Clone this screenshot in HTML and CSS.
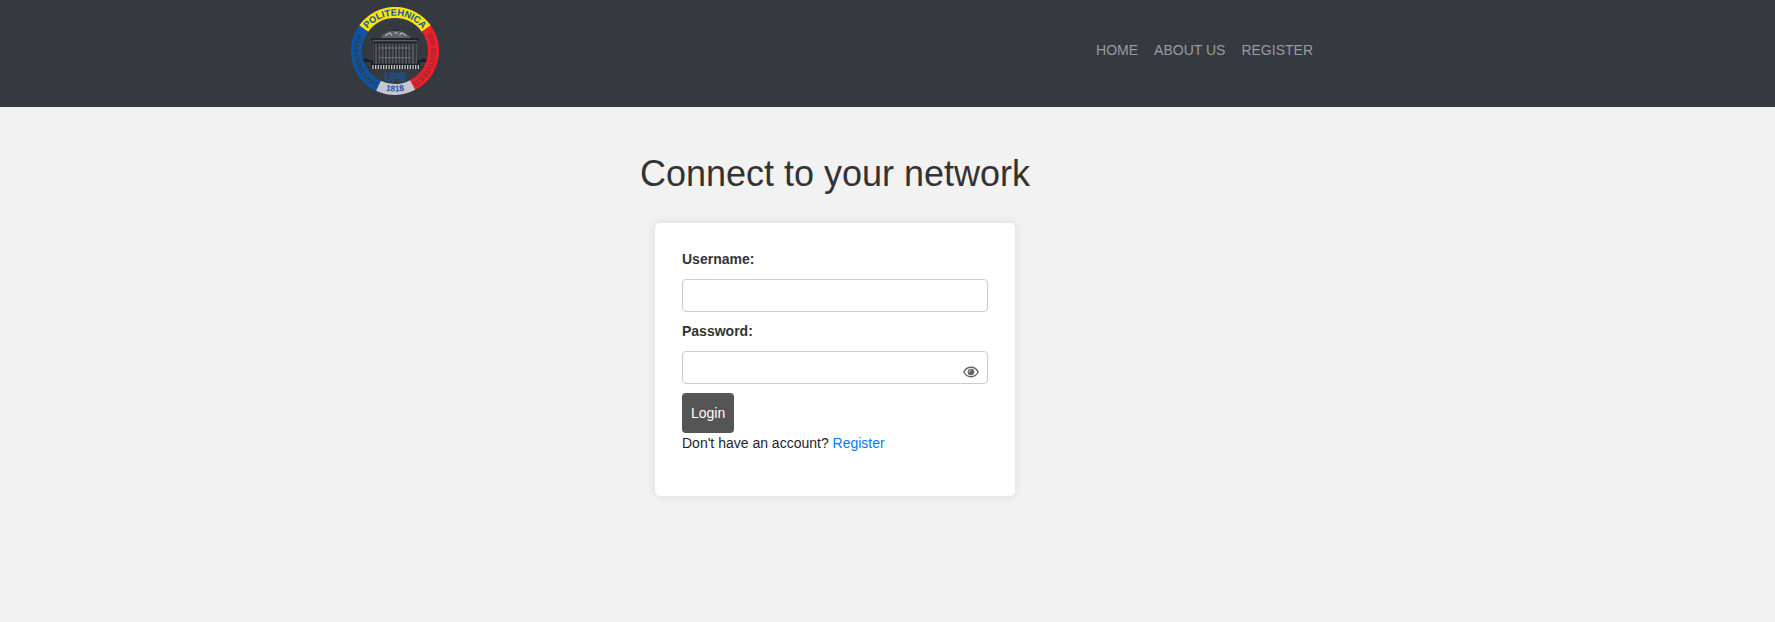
FILE: index.html
```html
<!DOCTYPE html>
<html lang="en">
<head>
<meta charset="utf-8">
<title>Connect to your network</title>
<link rel="stylesheet" href="styles.css">
</head>
<body>
<header class="site-header">
  <div class="header-inner">
    <a class="brand" href="#" aria-label="Politehnica home">
      <svg class="logo" viewBox="0 0 264 264">
        <defs>
          <path id="arc-top" d="M26 132A106 106 0 0 1 238 132"/>
          <path id="arc-left" d="M100 235A108 108 0 0 1 46 67"/>
          <path id="arc-right" d="M215 64A108 108 0 0 1 164 235"/>
          <path id="arc-bottom" d="M60 230A122 122 0 0 0 204 230"/>
        </defs>
        <g fill="none" stroke-width="33">
          <path stroke="#ffe20a" d="M38 65A115 115 0 0 1 226 65"/>
          <path stroke="#ed1f29" d="M226 65A115 115 0 0 1 185 234"/>
          <path stroke="#c5c6d0" d="M185 234A115 115 0 0 1 82 236"/>
          <path stroke="#0c54a4" d="M82 236A115 115 0 0 1 38 65"/>
        </g>
        <g class="logo-text">
          <text font-size="28" fill="#0c54a4"><textPath href="#arc-top" startOffset="50%" text-anchor="middle">POLITEHNICA</textPath></text>
          <text font-size="21" fill="#343a48"><textPath href="#arc-left" startOffset="50%" text-anchor="middle">UNIVERSITATEA</textPath></text>
          <text font-size="21" fill="#8d2c38"><textPath href="#arc-right" startOffset="50%" text-anchor="middle">DIN BUCUREȘTI</textPath></text>
          <text font-size="25" fill="#0c54a4"><textPath href="#arc-bottom" startOffset="50%" text-anchor="middle">1818</textPath></text>
        </g>
        <path fill="#24282c" d="M126 66h16l4 8h-24zM60 93h144v8h-6v9H66v-9h-6z"/>
        <path fill="#5c6268" d="M88 93c8-16 26-22 45-22s37 6 46 22z"/>
        <path fill="none" stroke="#c3c6c8" stroke-width="3" d="M102 86l16-9 4 9M146 86l4-9 16 9M130 78h10"/>
        <path fill="#50555a" d="M66 110h132v61H66z"/>
        <path fill="none" stroke="#272b2f" stroke-width="4" d="M70 110v62M80 110v62M90 110v62M100 110v62M110 110v62M120 110v62M130 110v62M140 110v62M150 110v62M160 110v62M170 110v62M180 110v62M192 110v62"/>
        <path fill="none" stroke="#868b90" stroke-width="2" d="M66 101h132M84 123h96M84 152h96"/>
        <path fill="#1d2023" d="M38 155h14v5h14v10h132v-10h14v-5h14v10h-20v20H60v-20H38z"/>
        <path fill="none" stroke="#c3c6c8" stroke-width="12" stroke-dasharray="4 4" d="M64 180h142"/>
        <text class="logo-upb" x="134" y="221" text-anchor="middle">UPB</text>
      </svg>
    </a>
    <nav class="site-nav">
      <a href="#">HOME</a>
      <a href="#">ABOUT US</a>
      <a href="#">REGISTER</a>
    </nav>
  </div>
</header>
<main class="page">
  <h1 class="page-title">Connect to your network</h1>
  <form class="card">
    <label class="field-label" for="username">Username:</label>
    <input class="field-input" id="username" name="username" type="text">
    <label class="field-label" for="password">Password:</label>
    <div class="password-field">
      <input class="field-input" id="password" name="password" type="password">
      <button class="toggle" type="button" aria-label="Show password">
        <svg viewBox="0 0 16 12"><path fill="none" stroke="#666" stroke-width="1.4" d="M.8 6C4-.3 12-.3 15.200 6 12 12.300 4 12.300.8 6z"/><circle cx="8" cy="6" r="3.300" fill="#666"/><path fill="none" stroke="#ddd" stroke-width=".8" d="M6 6a2 2 0 0 1 2-2"/></svg>
      </button>
    </div>
    <button class="login" type="submit">Login</button>
    <p class="signup">Don't have an account? <a href="#">Register</a></p>
  </form>
</main>
</body>
</html>
```
FILE: styles.css
```css
* {
  box-sizing: border-box;
}

body {
  margin: 0;
  background: #f2f2f2;
  color: #212529;
  font: 14px/21px "Liberation Sans", Arial, sans-serif;
}

a {
  color: #007bff;
  text-decoration: none;
}

.site-header {
  padding: 7px 103px 12px 0;
  background: #343a40;
}

.header-inner {
  display: flex;
  align-items: center;
  justify-content: space-between;
  max-width: 970px;
  margin: 0 auto;
}

.brand,
.logo {
  display: block;
}

.logo {
  width: 88px;
  height: 88px;
}

.logo-text {
  font-weight: bold;
}

.logo-upb {
  fill: #343a40;
  stroke: #215088;
  stroke-width: 3px;
  font-size: 31px;
  font-weight: bold;
}

.site-nav {
  display: flex;
}

.site-nav a {
  padding: 7px 8px 9px;
  color: #999c9f;
}

.page {
  display: flex;
  flex-direction: column;
  align-items: center;
  padding: 45px 105px 45px 0;
}

.page-title {
  margin: 0 0 27px;
  color: #333;
  font-size: 36px;
  font-weight: normal;
  line-height: 44px;
}

.card {
  display: flex;
  flex-direction: column;
  align-items: stretch;
  gap: 9px;
  width: 100%;
  max-width: 360px;
  padding: 26px 27px 42px;
  border-radius: 5px;
  background: #fff;
  box-shadow: 0 0 10px rgba(0, 0, 0, 0.1);
}

.field-label {
  color: #333;
  font-weight: bold;
}

.field-input {
  display: block;
  width: 100%;
  height: 33px;
  padding: 8px;
  border: 1px solid #ccc;
  border-radius: 4px;
  background: #fff;
  font: inherit;
}

.password-field {
  position: relative;
}

.toggle {
  position: absolute;
  right: 9px;
  bottom: 6px;
  padding: 0;
  border: 0;
  background: none;
}

.toggle svg {
  display: block;
  width: 16px;
  height: 12px;
}

.login {
  align-self: flex-start;
  height: 40px;
  padding: 0 9px;
  border: 0;
  border-radius: 4px;
  background: #555;
  color: #fff;
  font: inherit;
}

.signup {
  margin: -9px 0 0;
}
```
